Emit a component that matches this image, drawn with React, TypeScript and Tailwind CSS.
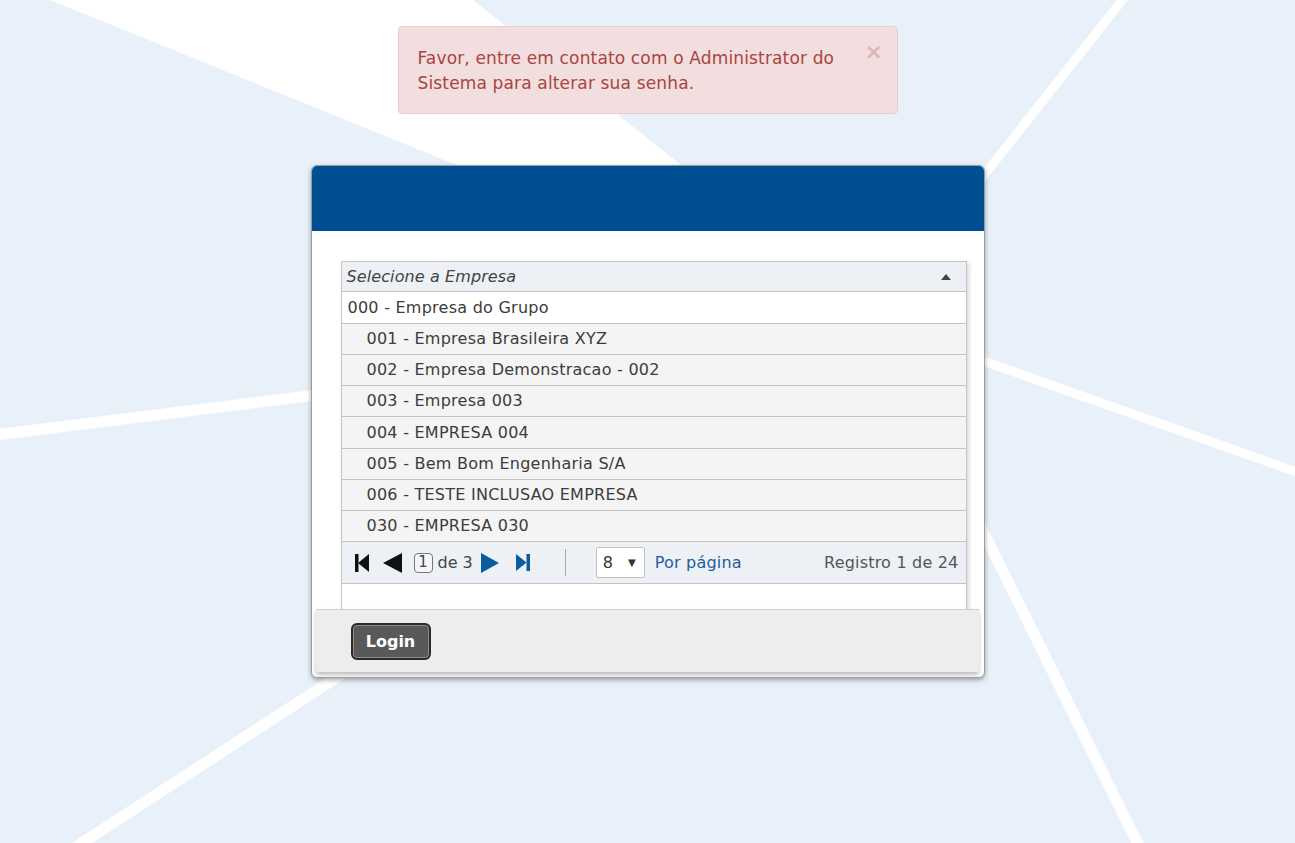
import React from "react";

function Background() {
  return (
    <svg
      className="absolute inset-0 h-full w-full"
      viewBox="0 0 1295 843"
      preserveAspectRatio="none"
    >
      <rect x="0" y="0" width="1295" height="843" fill="#e8f1f9" />
      <polygon points="50,0 473,0 700,180 700,250 666,250" fill="#ffffff" />
      <line x1="1127" y1="-6" x2="955" y2="212" stroke="#ffffff" strokeWidth="9" />
      <line x1="955" y1="351" x2="1305" y2="475" stroke="#ffffff" strokeWidth="9" />
      <line x1="-5" y1="435" x2="340" y2="392" stroke="#ffffff" strokeWidth="11" />
      <line x1="345" y1="672" x2="68" y2="852" stroke="#ffffff" strokeWidth="11" />
      <line x1="970" y1="505" x2="1142" y2="852" stroke="#ffffff" strokeWidth="11" />
    </svg>
  );
}

function FirstIcon() {
  return (
    <svg width="14" height="18" viewBox="0 0 14 18">
      <rect x="0" y="0" width="3.5" height="18" fill="#111" />
      <polygon points="14,0 14,18 3,9" fill="#111" />
    </svg>
  );
}
function PrevIcon() {
  return (
    <svg width="19" height="20" viewBox="0 0 19 20">
      <polygon points="19,0 19,20 0,10" fill="#111" />
    </svg>
  );
}
function NextIcon() {
  return (
    <svg width="18" height="20" viewBox="0 0 18 20">
      <polygon points="0,0 0,20 18,10" fill="#0b5c9e" />
    </svg>
  );
}
function LastIcon() {
  return (
    <svg width="14" height="17" viewBox="0 0 14 17">
      <polygon points="0,0 0,17 10.5,8.5" fill="#0b5c9e" />
      <rect x="10.5" y="0" width="3.5" height="17" fill="#0b5c9e" />
    </svg>
  );
}

export default function App() {
  const rows = [
    { t: "001 - Empresa Brasileira XYZ", h: "h-[31px]" },
    { t: "002 - Empresa Demonstracao - 002", h: "h-[31px]" },
    { t: "003 - Empresa 003", h: "h-[31px]" },
    { t: "004 - EMPRESA 004", h: "h-[32px]" },
    { t: "005 - Bem Bom Engenharia S/A", h: "h-[31px]" },
    { t: "006 - TESTE INCLUSAO EMPRESA", h: "h-[31px]" },
    { t: "030 - EMPRESA 030", h: "h-[31px]" },
  ];
  return (
    <div className="relative min-h-screen w-full overflow-hidden font-['DejaVu_Sans','Noto_Sans',sans-serif]">
      <Background />
      <div className="relative flex flex-col items-center pt-[26px]">
        {/* Alert */}
        <div className="flex h-[88px] w-[500px] items-start rounded-[4px] border border-[#ebccd1] bg-[#f2dede] pl-[19px] pt-[19px] text-[#a94442]">
          <div className="w-[447px] whitespace-nowrap text-[17px] leading-[25px] tracking-[0.15px]">
            Favor, entre em contato com o Administrator do
            <br />
            Sistema para alterar sua senha.
          </div>
          <span className="-mt-[7px] text-[22px] font-bold leading-[25px] text-[#a94442] opacity-25">
            ×
          </span>
        </div>

        {/* Card */}
        <div className="mt-[51px] w-[674px] overflow-hidden rounded-[6px] border border-[#9d9d9d] bg-white shadow-[0_2px_5px_rgba(0,0,0,0.35)]">
          <div className="h-[65px] bg-[#004f93]" />
          <div className="pl-[29px] pt-[30px]">
            <div className="w-[626px] border-x border-t border-[#c4c4c4] shadow-[2px_2px_4px_rgba(0,0,0,0.15)]">
              <div className="flex h-[30px] items-center justify-between border-b border-[#c4c4c4] bg-[#edf0f5] pl-[5px] pr-[15px]">
                <span className="text-[16px] italic tracking-[0.1px] text-[#444]">
                  Selecione a Empresa
                </span>
                <svg width="10" height="6" viewBox="0 0 10 6">
                  <polygon points="0,6 10,6 5,0" fill="#444" />
                </svg>
              </div>
              <div className="flex h-[32px] items-center border-b border-[#c4c4c4] bg-white pl-[6px] text-[16px] tracking-[0.25px] text-[#3c3c3c]">
                000 - Empresa do Grupo
              </div>
              {rows.map((r) => (
                <div
                  key={r.t}
                  className={`flex ${r.h} items-center border-b border-[#c4c4c4] bg-[#f4f4f4] pl-[25px] text-[16px] tracking-[0.25px] text-[#3c3c3c]`}
                >
                  {r.t}
                </div>
              ))}
              <div className="flex h-[42px] items-center border-b border-[#c4c4c4] bg-[#edf0f5] pl-[13px] pr-[7px] text-[16px] text-[#444]">
                <FirstIcon />
                <span className="ml-[14px] flex">
                  <PrevIcon />
                </span>
                <span className="ml-[12px] flex h-[20px] w-[19px] items-center justify-center rounded-[4px] border border-[#777] bg-white/40 text-[15px] leading-none">
                  1
                </span>
                <span className="ml-[5px]">de 3</span>
                <span className="ml-[8px] flex">
                  <NextIcon />
                </span>
                <span className="ml-[17px] flex">
                  <LastIcon />
                </span>
                <span className="ml-[35px] h-[27px] w-px bg-[#a8a8a8]" />
                <div className="ml-[30px] flex h-[31px] w-[49px] items-center justify-between rounded-[2px] border border-[#c0c0c0] bg-white pl-[6px] pr-[8px]">
                  <span className="text-[16px] text-[#333]">8</span>
                  <span className="text-[10px] text-[#333]">▼</span>
                </div>
                <span className="ml-[10px] tracking-[0.2px] text-[#1d5f9c]">Por página</span>
                <span className="ml-auto tracking-[0.2px] text-[#555]">Registro 1 de 24</span>
              </div>
              <div className="h-[25px] bg-white" />
            </div>
          </div>
          <div className="ml-[4px] mr-[5px] mb-[5px] h-[63px] rounded-b-[3px] border-t border-[#cfcfcf] bg-[#ededed] pl-[35px] pt-[13px] shadow-[0_3px_4px_rgba(0,0,0,0.25)]">
            <button className="flex h-[37px] w-[80px] items-center justify-center rounded-[6px] border-2 border-[#2b2b2b] bg-[#595959] text-[16px] font-bold text-white shadow-[inset_0_0_0_1px_#8c8c8c]">
              Login
            </button>
          </div>
        </div>
      </div>
    </div>
  );
}
